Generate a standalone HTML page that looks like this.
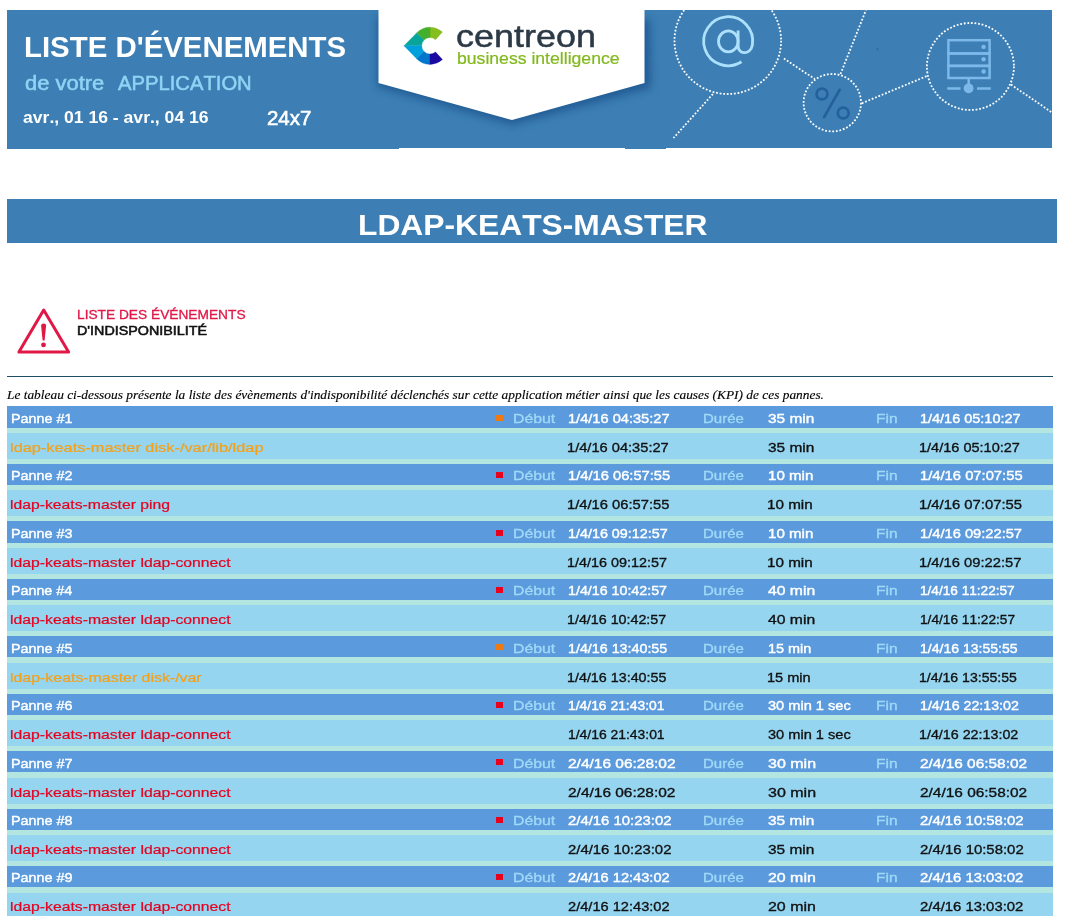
<!DOCTYPE html>
<html><head><meta charset="utf-8"><title>Liste d'évènements</title>
<style>
html,body{margin:0;padding:0;background:#fff}
body{position:relative;width:1069px;height:916px;overflow:hidden;font-family:"Liberation Sans",sans-serif}
.t{position:absolute;white-space:pre;transform-origin:0 0;font-kerning:none}
.r{position:absolute}
svg{position:absolute;left:0;top:0}
</style></head><body>
<div class="r" style="left:7px;top:10px;width:1045px;height:138px;background:#3d7fb4;"></div>
<div class="r" style="left:7px;top:148px;width:392px;height:1px;background:#3d7fb4;"></div>
<div class="r" style="left:625px;top:148px;width:41px;height:1px;background:#3d7fb4;"></div>
<svg width="1069" height="160" viewBox="0 0 1069 160">
<defs>
<clipPath id="bclip"><rect x="7" y="10" width="1045" height="138"/></clipPath>
<filter id="sh" x="-20%" y="-20%" width="140%" height="160%"><feGaussianBlur stdDeviation="4.5"/></filter>
</defs>
<g clip-path="url(#bclip)">
<polygon points="377,16 650,19 651,88 512,125 377,87" fill="#1b548e" opacity="0.8" filter="url(#sh)"/>
<polygon points="378.5,0 644.5,0 644.5,83 512,120 378.5,83" fill="#ffffff"/>
<g fill="none" stroke="#ffffff" stroke-width="1.8" stroke-dasharray="1.8 1.8">
<circle cx="727.8" cy="40.7" r="53.3"/>
<circle cx="832.3" cy="102.7" r="28.7"/>
<circle cx="970.4" cy="66.5" r="43.5"/>
<line x1="712.9" y1="94" x2="673.5" y2="138"/>
<line x1="783.9" y1="58.4" x2="814.8" y2="79"/>
<line x1="840.5" y1="74" x2="866" y2="10"/>
<line x1="861.8" y1="103.3" x2="927" y2="76"/>
<line x1="1011" y1="84.6" x2="1052" y2="112.5"/>
</g>
<g fill="none" stroke="#ace0fb" stroke-width="2.8">
<path d="M741.5,61.8 A24.5,24.5 0 1 1 752.4,45 C751.5,50.5 747.5,53 743.8,52.6 C740,52.2 738.1,49 738.1,45 L738.1,30.4"/>
<ellipse cx="728.3" cy="41.35" rx="9.8" ry="10.5"/>
</g>
<g fill="none" stroke="#23609d" stroke-width="2.7" stroke-linecap="round">
<circle cx="822" cy="94" r="5.45"/>
<circle cx="843.2" cy="113" r="5.45"/>
<line x1="839.6" y1="89.8" x2="824.1" y2="117.2"/>
</g>
<g fill="none" stroke="#7cb9ea" stroke-width="2.5">
<rect x="948.4" y="40.2" width="41.2" height="13.3"/>
<rect x="948.4" y="53.5" width="41.2" height="12.4"/>
<rect x="948.4" y="65.9" width="41.2" height="12.1"/>
<line x1="968.7" y1="79" x2="968.7" y2="86"/>
<line x1="947.2" y1="88.5" x2="960.5" y2="88.5"/>
<line x1="977" y1="88.5" x2="990.8" y2="88.5"/>
</g>
<g fill="#7cb9ea">
<circle cx="983.6" cy="46.9" r="2.2"/>
<circle cx="983.6" cy="59.3" r="2.2"/>
<circle cx="983.6" cy="71.5" r="2.2"/>
<circle cx="968.6" cy="88.3" r="4.9"/>
</g>
<g>
<path d="M442.45,31.98 A18.6,18.6 0 0 0 430,27.2 L430,37.5 A8.3,8.3 0 0 1 435.55,39.63 Z" fill="#86bd1f" stroke="#86bd1f" stroke-width="0.35"/>
<path d="M430,27.2 A18.6,18.6 0 0 0 416.62,32.88 L424.03,40.03 A8.3,8.3 0 0 1 430,37.5 Z" fill="#44ae2d" stroke="#44ae2d" stroke-width="0.35"/>
<path d="M416.62,32.88 L404,45.8 L421.7,45.8 A8.3,8.3 0 0 1 424.03,40.03 Z" fill="#0aa59a" stroke="#0aa59a" stroke-width="0.35"/>
<path d="M404,45.8 L416.62,58.72 L424.03,51.57 A8.3,8.3 0 0 1 421.7,45.8 Z" fill="#00a0dc" stroke="#00a0dc" stroke-width="0.35"/>
<path d="M416.62,58.72 A18.6,18.6 0 0 0 430,64.4 L430,54.1 A8.3,8.3 0 0 1 424.03,51.57 Z" fill="#0076cc" stroke="#0076cc" stroke-width="0.35"/>
<path d="M430,64.4 A18.6,18.6 0 0 0 442.45,59.62 L435.55,51.97 A8.3,8.3 0 0 1 430,54.1 Z" fill="#1a0aa0" stroke="#1a0aa0" stroke-width="0.35"/>
</g>
</g>
<circle cx="877.5" cy="49.3" r="1.2" fill="#3470a6"/>

</svg>

<span class="t" style="left:24.28px;top:32.75px;font-family:'Liberation Sans',sans-serif;font-size:29px;font-weight:bold;font-style:normal;color:#ffffff;line-height:29px;transform:scaleX(1.0132);">LISTE D&#x27;ÉVENEMENTS</span>
<span class="t" style="left:25.37px;top:74.11px;font-family:'Liberation Sans',sans-serif;font-size:19.6px;font-weight:normal;font-style:normal;color:#8fd4f4;line-height:19.6px;transform:scaleX(1.1204);-webkit-text-stroke:0.5px #8fd4f4;">de votre</span>
<span class="t" style="left:117.56px;top:74.11px;font-family:'Liberation Sans',sans-serif;font-size:19.6px;font-weight:normal;font-style:normal;color:#8fd4f4;line-height:19.6px;transform:scaleX(1.0320);-webkit-text-stroke:0.5px #8fd4f4;">APPLICATION</span>
<span class="t" style="left:23.10px;top:109.21px;font-family:'Liberation Sans',sans-serif;font-size:17.0px;font-weight:bold;font-style:normal;color:#ffffff;line-height:17.0px;transform:scaleX(1.0334);">avr., 01 16 - avr., 04 16</span>
<span class="t" style="left:267.09px;top:109.15px;font-family:'Liberation Sans',sans-serif;font-size:19.9px;font-weight:normal;font-style:normal;color:#ffffff;line-height:19.9px;transform:scaleX(1.0282);-webkit-text-stroke:0.6px #ffffff;">24x7</span>
<span class="t" style="left:455.60px;top:20.68px;font-family:'Liberation Sans',sans-serif;font-size:31.8px;font-weight:normal;font-style:normal;color:#2c3a47;line-height:31.8px;transform:scaleX(1.1309);-webkit-text-stroke:0.5px #2c3a47;">centreon</span>
<span class="t" style="left:456.72px;top:50.64px;font-family:'Liberation Sans',sans-serif;font-size:15.9px;font-weight:normal;font-style:normal;color:#82b91c;line-height:15.9px;transform:scaleX(1.1084);-webkit-text-stroke:0.2px #82b91c;">business intelligence</span>
<div class="r" style="left:7px;top:199px;width:1050px;height:44px;background:#3d7fb4;"></div>
<span class="t" style="left:358.14px;top:209.54px;font-family:'Liberation Sans',sans-serif;font-size:30.2px;font-weight:bold;font-style:normal;color:#ffffff;line-height:30.2px;transform:scaleX(1.0526);">LDAP-KEATS-MASTER</span>
<svg width="100" height="400" viewBox="0 0 100 400">
<polygon points="43.7,310 18.9,352.1 68.6,352.1" fill="none" stroke="#e11846" stroke-width="3" stroke-linejoin="round"/>
<path d="M41.1,325.5 Q41.1,323.6 43.6,323.6 Q46.1,323.6 46.1,325.5 L44.6,340.6 L42.6,340.6 Z" fill="#e11846"/>
<circle cx="43.5" cy="344.9" r="2.4" fill="#e11846"/>
</svg>

<span class="t" style="left:76.81px;top:308.83px;font-family:'Liberation Sans',sans-serif;font-size:12.6px;font-weight:normal;font-style:normal;color:#e01848;line-height:12.6px;transform:scaleX(1.0899);-webkit-text-stroke:0.3px #e01848;">LISTE DES ÉVÉNEMENTS</span>
<span class="t" style="left:77.20px;top:324.66px;font-family:'Liberation Sans',sans-serif;font-size:12.8px;font-weight:normal;font-style:normal;color:#111111;line-height:12.8px;transform:scaleX(1.1188);-webkit-text-stroke:0.55px #111111;">D&#x27;INDISPONIBILITÉ</span>
<div class="r" style="left:7px;top:376px;width:1046px;height:1px;background:#1f4d66;"></div>
<span class="t" style="left:7.48px;top:387.84px;font-family:'Liberation Serif',serif;font-size:13.2px;font-weight:normal;font-style:italic;color:#000000;line-height:13.2px;transform:scaleX(1.0141);-webkit-text-stroke:0.15px #000000;">Le tableau ci-dessous présente la liste des évènements d&#x27;indisponibilité déclenchés sur cette application métier ainsi que les causes (KPI) de ces pannes.</span>
<div class="r" style="left:7px;top:406px;width:1046px;height:510px;background:#b3e6e0;"></div>
<div class="r" style="left:7px;top:406px;width:1046px;height:22px;background:#5b9bdd;"></div>
<div class="r" style="left:7px;top:433px;width:1046px;height:26px;background:#95d5f0;"></div>
<span class="t" style="left:10.82px;top:411.87px;font-family:'Liberation Sans',sans-serif;font-size:13.5px;font-weight:normal;font-style:normal;color:#ffffff;line-height:13.5px;transform:scaleX(1.0626);-webkit-text-stroke:0.42px #ffffff;">Panne #1</span>
<div class="r" style="left:496px;top:415px;width:7px;height:6px;background:#f07a12;"></div>
<span class="t" style="left:513.28px;top:411.87px;font-family:'Liberation Sans',sans-serif;font-size:13.5px;font-weight:normal;font-style:normal;color:#a0d9f6;line-height:13.5px;transform:scaleX(1.1722);-webkit-text-stroke:0.35px #a0d9f6;">Début</span>
<span class="t" style="left:567.80px;top:411.87px;font-family:'Liberation Sans',sans-serif;font-size:13.5px;font-weight:normal;font-style:normal;color:#ffffff;line-height:13.5px;transform:scaleX(1.0821);-webkit-text-stroke:0.42px #ffffff;">1/4/16 04:35:27</span>
<span class="t" style="left:703.45px;top:411.87px;font-family:'Liberation Sans',sans-serif;font-size:13.5px;font-weight:normal;font-style:normal;color:#a0d9f6;line-height:13.5px;transform:scaleX(1.1125);-webkit-text-stroke:0.35px #a0d9f6;">Durée</span>
<span class="t" style="left:767.92px;top:411.87px;font-family:'Liberation Sans',sans-serif;font-size:13.5px;font-weight:normal;font-style:normal;color:#ffffff;line-height:13.5px;transform:scaleX(1.1419);-webkit-text-stroke:0.42px #ffffff;">35 min</span>
<span class="t" style="left:876.31px;top:411.87px;font-family:'Liberation Sans',sans-serif;font-size:13.5px;font-weight:normal;font-style:normal;color:#a0d9f6;line-height:13.5px;transform:scaleX(1.1453);-webkit-text-stroke:0.35px #a0d9f6;">Fin</span>
<span class="t" style="left:919.81px;top:411.87px;font-family:'Liberation Sans',sans-serif;font-size:13.5px;font-weight:normal;font-style:normal;color:#ffffff;line-height:13.5px;transform:scaleX(1.0713);-webkit-text-stroke:0.42px #ffffff;">1/4/16 05:10:27</span>
<span class="t" style="left:10.32px;top:440.87px;font-family:'Liberation Sans',sans-serif;font-size:13.5px;font-weight:normal;font-style:normal;color:#f5a017;line-height:13.5px;transform:scaleX(1.2109);-webkit-text-stroke:0.22px #f5a017;">ldap-keats-master disk-/var/lib/ldap</span>
<span class="t" style="left:567.44px;top:440.87px;font-family:'Liberation Sans',sans-serif;font-size:13.5px;font-weight:normal;font-style:normal;color:#111111;line-height:13.5px;transform:scaleX(1.0841);-webkit-text-stroke:0.35px #111111;">1/4/16 04:35:27</span>
<span class="t" style="left:767.88px;top:440.87px;font-family:'Liberation Sans',sans-serif;font-size:13.5px;font-weight:normal;font-style:normal;color:#111111;line-height:13.5px;transform:scaleX(1.1433);-webkit-text-stroke:0.35px #111111;">35 min</span>
<span class="t" style="left:919.45px;top:440.87px;font-family:'Liberation Sans',sans-serif;font-size:13.5px;font-weight:normal;font-style:normal;color:#111111;line-height:13.5px;transform:scaleX(1.0754);-webkit-text-stroke:0.35px #111111;">1/4/16 05:10:27</span>
<div class="r" style="left:7px;top:464px;width:1046px;height:21px;background:#5b9bdd;"></div>
<div class="r" style="left:7px;top:490px;width:1046px;height:26px;background:#95d5f0;"></div>
<span class="t" style="left:10.82px;top:469.32px;font-family:'Liberation Sans',sans-serif;font-size:13.5px;font-weight:normal;font-style:normal;color:#ffffff;line-height:13.5px;transform:scaleX(1.0629);-webkit-text-stroke:0.42px #ffffff;">Panne #2</span>
<div class="r" style="left:496px;top:472px;width:7px;height:6px;background:#e8001c;"></div>
<span class="t" style="left:513.28px;top:469.32px;font-family:'Liberation Sans',sans-serif;font-size:13.5px;font-weight:normal;font-style:normal;color:#a0d9f6;line-height:13.5px;transform:scaleX(1.1722);-webkit-text-stroke:0.35px #a0d9f6;">Début</span>
<span class="t" style="left:567.80px;top:469.32px;font-family:'Liberation Sans',sans-serif;font-size:13.5px;font-weight:normal;font-style:normal;color:#ffffff;line-height:13.5px;transform:scaleX(1.0890);-webkit-text-stroke:0.42px #ffffff;">1/4/16 06:57:55</span>
<span class="t" style="left:703.45px;top:469.32px;font-family:'Liberation Sans',sans-serif;font-size:13.5px;font-weight:normal;font-style:normal;color:#a0d9f6;line-height:13.5px;transform:scaleX(1.1125);-webkit-text-stroke:0.35px #a0d9f6;">Durée</span>
<span class="t" style="left:767.78px;top:469.32px;font-family:'Liberation Sans',sans-serif;font-size:13.5px;font-weight:normal;font-style:normal;color:#ffffff;line-height:13.5px;transform:scaleX(1.1180);-webkit-text-stroke:0.42px #ffffff;">10 min</span>
<span class="t" style="left:876.31px;top:469.32px;font-family:'Liberation Sans',sans-serif;font-size:13.5px;font-weight:normal;font-style:normal;color:#a0d9f6;line-height:13.5px;transform:scaleX(1.1453);-webkit-text-stroke:0.35px #a0d9f6;">Fin</span>
<span class="t" style="left:919.79px;top:469.32px;font-family:'Liberation Sans',sans-serif;font-size:13.5px;font-weight:normal;font-style:normal;color:#ffffff;line-height:13.5px;transform:scaleX(1.0933);-webkit-text-stroke:0.42px #ffffff;">1/4/16 07:07:55</span>
<span class="t" style="left:10.37px;top:498.32px;font-family:'Liberation Sans',sans-serif;font-size:13.5px;font-weight:normal;font-style:normal;color:#e6001f;line-height:13.5px;transform:scaleX(1.1655);-webkit-text-stroke:0.22px #e6001f;">ldap-keats-master ping</span>
<span class="t" style="left:567.44px;top:498.32px;font-family:'Liberation Sans',sans-serif;font-size:13.5px;font-weight:normal;font-style:normal;color:#111111;line-height:13.5px;transform:scaleX(1.0910);-webkit-text-stroke:0.35px #111111;">1/4/16 06:57:55</span>
<span class="t" style="left:767.40px;top:498.32px;font-family:'Liberation Sans',sans-serif;font-size:13.5px;font-weight:normal;font-style:normal;color:#111111;line-height:13.5px;transform:scaleX(1.1278);-webkit-text-stroke:0.35px #111111;">10 min</span>
<span class="t" style="left:919.43px;top:498.32px;font-family:'Liberation Sans',sans-serif;font-size:13.5px;font-weight:normal;font-style:normal;color:#111111;line-height:13.5px;transform:scaleX(1.0975);-webkit-text-stroke:0.35px #111111;">1/4/16 07:07:55</span>
<div class="r" style="left:7px;top:521px;width:1046px;height:22px;background:#5b9bdd;"></div>
<div class="r" style="left:7px;top:548px;width:1046px;height:26px;background:#95d5f0;"></div>
<span class="t" style="left:10.82px;top:526.77px;font-family:'Liberation Sans',sans-serif;font-size:13.5px;font-weight:normal;font-style:normal;color:#ffffff;line-height:13.5px;transform:scaleX(1.0633);-webkit-text-stroke:0.42px #ffffff;">Panne #3</span>
<div class="r" style="left:496px;top:530px;width:7px;height:6px;background:#e8001c;"></div>
<span class="t" style="left:513.28px;top:526.77px;font-family:'Liberation Sans',sans-serif;font-size:13.5px;font-weight:normal;font-style:normal;color:#a0d9f6;line-height:13.5px;transform:scaleX(1.1722);-webkit-text-stroke:0.35px #a0d9f6;">Début</span>
<span class="t" style="left:567.82px;top:526.77px;font-family:'Liberation Sans',sans-serif;font-size:13.5px;font-weight:normal;font-style:normal;color:#ffffff;line-height:13.5px;transform:scaleX(1.0626);-webkit-text-stroke:0.42px #ffffff;">1/4/16 09:12:57</span>
<span class="t" style="left:703.45px;top:526.77px;font-family:'Liberation Sans',sans-serif;font-size:13.5px;font-weight:normal;font-style:normal;color:#a0d9f6;line-height:13.5px;transform:scaleX(1.1125);-webkit-text-stroke:0.35px #a0d9f6;">Durée</span>
<span class="t" style="left:767.78px;top:526.77px;font-family:'Liberation Sans',sans-serif;font-size:13.5px;font-weight:normal;font-style:normal;color:#ffffff;line-height:13.5px;transform:scaleX(1.1180);-webkit-text-stroke:0.42px #ffffff;">10 min</span>
<span class="t" style="left:876.31px;top:526.77px;font-family:'Liberation Sans',sans-serif;font-size:13.5px;font-weight:normal;font-style:normal;color:#a0d9f6;line-height:13.5px;transform:scaleX(1.1453);-webkit-text-stroke:0.35px #a0d9f6;">Fin</span>
<span class="t" style="left:919.80px;top:526.77px;font-family:'Liberation Sans',sans-serif;font-size:13.5px;font-weight:normal;font-style:normal;color:#ffffff;line-height:13.5px;transform:scaleX(1.0874);-webkit-text-stroke:0.42px #ffffff;">1/4/16 09:22:57</span>
<span class="t" style="left:10.37px;top:555.77px;font-family:'Liberation Sans',sans-serif;font-size:13.5px;font-weight:normal;font-style:normal;color:#e6001f;line-height:13.5px;transform:scaleX(1.1666);-webkit-text-stroke:0.22px #e6001f;">ldap-keats-master ldap-connect</span>
<span class="t" style="left:567.46px;top:555.77px;font-family:'Liberation Sans',sans-serif;font-size:13.5px;font-weight:normal;font-style:normal;color:#111111;line-height:13.5px;transform:scaleX(1.0646);-webkit-text-stroke:0.35px #111111;">1/4/16 09:12:57</span>
<span class="t" style="left:767.40px;top:555.77px;font-family:'Liberation Sans',sans-serif;font-size:13.5px;font-weight:normal;font-style:normal;color:#111111;line-height:13.5px;transform:scaleX(1.1278);-webkit-text-stroke:0.35px #111111;">10 min</span>
<span class="t" style="left:919.44px;top:555.77px;font-family:'Liberation Sans',sans-serif;font-size:13.5px;font-weight:normal;font-style:normal;color:#111111;line-height:13.5px;transform:scaleX(1.0917);-webkit-text-stroke:0.35px #111111;">1/4/16 09:22:57</span>
<div class="r" style="left:7px;top:579px;width:1046px;height:21px;background:#5b9bdd;"></div>
<div class="r" style="left:7px;top:605px;width:1046px;height:26px;background:#95d5f0;"></div>
<span class="t" style="left:10.83px;top:584.22px;font-family:'Liberation Sans',sans-serif;font-size:13.5px;font-weight:normal;font-style:normal;color:#ffffff;line-height:13.5px;transform:scaleX(1.0585);-webkit-text-stroke:0.42px #ffffff;">Panne #4</span>
<div class="r" style="left:496px;top:587px;width:7px;height:6px;background:#e8001c;"></div>
<span class="t" style="left:513.28px;top:584.22px;font-family:'Liberation Sans',sans-serif;font-size:13.5px;font-weight:normal;font-style:normal;color:#a0d9f6;line-height:13.5px;transform:scaleX(1.1722);-webkit-text-stroke:0.35px #a0d9f6;">Début</span>
<span class="t" style="left:567.82px;top:584.22px;font-family:'Liberation Sans',sans-serif;font-size:13.5px;font-weight:normal;font-style:normal;color:#ffffff;line-height:13.5px;transform:scaleX(1.0551);-webkit-text-stroke:0.42px #ffffff;">1/4/16 10:42:57</span>
<span class="t" style="left:703.45px;top:584.22px;font-family:'Liberation Sans',sans-serif;font-size:13.5px;font-weight:normal;font-style:normal;color:#a0d9f6;line-height:13.5px;transform:scaleX(1.1125);-webkit-text-stroke:0.35px #a0d9f6;">Durée</span>
<span class="t" style="left:768.39px;top:584.22px;font-family:'Liberation Sans',sans-serif;font-size:13.5px;font-weight:normal;font-style:normal;color:#ffffff;line-height:13.5px;transform:scaleX(1.1630);-webkit-text-stroke:0.42px #ffffff;">40 min</span>
<span class="t" style="left:876.31px;top:584.22px;font-family:'Liberation Sans',sans-serif;font-size:13.5px;font-weight:normal;font-style:normal;color:#a0d9f6;line-height:13.5px;transform:scaleX(1.1453);-webkit-text-stroke:0.35px #a0d9f6;">Fin</span>
<span class="t" style="left:919.86px;top:584.22px;font-family:'Liberation Sans',sans-serif;font-size:13.5px;font-weight:normal;font-style:normal;color:#ffffff;line-height:13.5px;transform:scaleX(1.0087);-webkit-text-stroke:0.42px #ffffff;">1/4/16 11:22:57</span>
<span class="t" style="left:10.37px;top:613.22px;font-family:'Liberation Sans',sans-serif;font-size:13.5px;font-weight:normal;font-style:normal;color:#e6001f;line-height:13.5px;transform:scaleX(1.1666);-webkit-text-stroke:0.22px #e6001f;">ldap-keats-master ldap-connect</span>
<span class="t" style="left:567.47px;top:613.22px;font-family:'Liberation Sans',sans-serif;font-size:13.5px;font-weight:normal;font-style:normal;color:#111111;line-height:13.5px;transform:scaleX(1.0570);-webkit-text-stroke:0.35px #111111;">1/4/16 10:42:57</span>
<span class="t" style="left:768.36px;top:613.22px;font-family:'Liberation Sans',sans-serif;font-size:13.5px;font-weight:normal;font-style:normal;color:#111111;line-height:13.5px;transform:scaleX(1.1639);-webkit-text-stroke:0.35px #111111;">40 min</span>
<span class="t" style="left:919.52px;top:613.22px;font-family:'Liberation Sans',sans-serif;font-size:13.5px;font-weight:normal;font-style:normal;color:#111111;line-height:13.5px;transform:scaleX(1.0126);-webkit-text-stroke:0.35px #111111;">1/4/16 11:22:57</span>
<div class="r" style="left:7px;top:636px;width:1046px;height:21px;background:#5b9bdd;"></div>
<div class="r" style="left:7px;top:663px;width:1046px;height:26px;background:#95d5f0;"></div>
<span class="t" style="left:10.82px;top:641.67px;font-family:'Liberation Sans',sans-serif;font-size:13.5px;font-weight:normal;font-style:normal;color:#ffffff;line-height:13.5px;transform:scaleX(1.0626);-webkit-text-stroke:0.42px #ffffff;">Panne #5</span>
<div class="r" style="left:496px;top:644px;width:7px;height:6px;background:#f07a12;"></div>
<span class="t" style="left:513.28px;top:641.67px;font-family:'Liberation Sans',sans-serif;font-size:13.5px;font-weight:normal;font-style:normal;color:#a0d9f6;line-height:13.5px;transform:scaleX(1.1722);-webkit-text-stroke:0.35px #a0d9f6;">Début</span>
<span class="t" style="left:567.82px;top:641.67px;font-family:'Liberation Sans',sans-serif;font-size:13.5px;font-weight:normal;font-style:normal;color:#ffffff;line-height:13.5px;transform:scaleX(1.0577);-webkit-text-stroke:0.42px #ffffff;">1/4/16 13:40:55</span>
<span class="t" style="left:703.45px;top:641.67px;font-family:'Liberation Sans',sans-serif;font-size:13.5px;font-weight:normal;font-style:normal;color:#a0d9f6;line-height:13.5px;transform:scaleX(1.1125);-webkit-text-stroke:0.35px #a0d9f6;">Durée</span>
<span class="t" style="left:767.81px;top:641.67px;font-family:'Liberation Sans',sans-serif;font-size:13.5px;font-weight:normal;font-style:normal;color:#ffffff;line-height:13.5px;transform:scaleX(1.0694);-webkit-text-stroke:0.42px #ffffff;">15 min</span>
<span class="t" style="left:876.31px;top:641.67px;font-family:'Liberation Sans',sans-serif;font-size:13.5px;font-weight:normal;font-style:normal;color:#a0d9f6;line-height:13.5px;transform:scaleX(1.1453);-webkit-text-stroke:0.35px #a0d9f6;">Fin</span>
<span class="t" style="left:919.83px;top:641.67px;font-family:'Liberation Sans',sans-serif;font-size:13.5px;font-weight:normal;font-style:normal;color:#ffffff;line-height:13.5px;transform:scaleX(1.0394);-webkit-text-stroke:0.42px #ffffff;">1/4/16 13:55:55</span>
<span class="t" style="left:10.36px;top:670.67px;font-family:'Liberation Sans',sans-serif;font-size:13.5px;font-weight:normal;font-style:normal;color:#f5a017;line-height:13.5px;transform:scaleX(1.1773);-webkit-text-stroke:0.22px #f5a017;">ldap-keats-master disk-/var</span>
<span class="t" style="left:567.47px;top:670.67px;font-family:'Liberation Sans',sans-serif;font-size:13.5px;font-weight:normal;font-style:normal;color:#111111;line-height:13.5px;transform:scaleX(1.0597);-webkit-text-stroke:0.35px #111111;">1/4/16 13:40:55</span>
<span class="t" style="left:767.45px;top:670.67px;font-family:'Liberation Sans',sans-serif;font-size:13.5px;font-weight:normal;font-style:normal;color:#111111;line-height:13.5px;transform:scaleX(1.0787);-webkit-text-stroke:0.35px #111111;">15 min</span>
<span class="t" style="left:919.49px;top:670.67px;font-family:'Liberation Sans',sans-serif;font-size:13.5px;font-weight:normal;font-style:normal;color:#111111;line-height:13.5px;transform:scaleX(1.0434);-webkit-text-stroke:0.35px #111111;">1/4/16 13:55:55</span>
<div class="r" style="left:7px;top:694px;width:1046px;height:21px;background:#5b9bdd;"></div>
<div class="r" style="left:7px;top:720px;width:1046px;height:26px;background:#95d5f0;"></div>
<span class="t" style="left:10.82px;top:699.12px;font-family:'Liberation Sans',sans-serif;font-size:13.5px;font-weight:normal;font-style:normal;color:#ffffff;line-height:13.5px;transform:scaleX(1.0632);-webkit-text-stroke:0.42px #ffffff;">Panne #6</span>
<div class="r" style="left:496px;top:702px;width:7px;height:6px;background:#e8001c;"></div>
<span class="t" style="left:513.28px;top:699.12px;font-family:'Liberation Sans',sans-serif;font-size:13.5px;font-weight:normal;font-style:normal;color:#a0d9f6;line-height:13.5px;transform:scaleX(1.1722);-webkit-text-stroke:0.35px #a0d9f6;">Début</span>
<span class="t" style="left:567.84px;top:699.12px;font-family:'Liberation Sans',sans-serif;font-size:13.5px;font-weight:normal;font-style:normal;color:#ffffff;line-height:13.5px;transform:scaleX(1.0275);-webkit-text-stroke:0.42px #ffffff;">1/4/16 21:43:01</span>
<span class="t" style="left:703.45px;top:699.12px;font-family:'Liberation Sans',sans-serif;font-size:13.5px;font-weight:normal;font-style:normal;color:#a0d9f6;line-height:13.5px;transform:scaleX(1.1125);-webkit-text-stroke:0.35px #a0d9f6;">Durée</span>
<span class="t" style="left:767.96px;top:699.12px;font-family:'Liberation Sans',sans-serif;font-size:13.5px;font-weight:normal;font-style:normal;color:#ffffff;line-height:13.5px;transform:scaleX(1.0805);-webkit-text-stroke:0.42px #ffffff;">30 min 1 sec</span>
<span class="t" style="left:876.31px;top:699.12px;font-family:'Liberation Sans',sans-serif;font-size:13.5px;font-weight:normal;font-style:normal;color:#a0d9f6;line-height:13.5px;transform:scaleX(1.1453);-webkit-text-stroke:0.35px #a0d9f6;">Fin</span>
<span class="t" style="left:919.82px;top:699.12px;font-family:'Liberation Sans',sans-serif;font-size:13.5px;font-weight:normal;font-style:normal;color:#ffffff;line-height:13.5px;transform:scaleX(1.0536);-webkit-text-stroke:0.42px #ffffff;">1/4/16 22:13:02</span>
<span class="t" style="left:10.37px;top:728.12px;font-family:'Liberation Sans',sans-serif;font-size:13.5px;font-weight:normal;font-style:normal;color:#e6001f;line-height:13.5px;transform:scaleX(1.1666);-webkit-text-stroke:0.22px #e6001f;">ldap-keats-master ldap-connect</span>
<span class="t" style="left:567.50px;top:728.12px;font-family:'Liberation Sans',sans-serif;font-size:13.5px;font-weight:normal;font-style:normal;color:#111111;line-height:13.5px;transform:scaleX(1.0294);-webkit-text-stroke:0.35px #111111;">1/4/16 21:43:01</span>
<span class="t" style="left:767.92px;top:728.12px;font-family:'Liberation Sans',sans-serif;font-size:13.5px;font-weight:normal;font-style:normal;color:#111111;line-height:13.5px;transform:scaleX(1.0814);-webkit-text-stroke:0.35px #111111;">30 min 1 sec</span>
<span class="t" style="left:919.47px;top:728.12px;font-family:'Liberation Sans',sans-serif;font-size:13.5px;font-weight:normal;font-style:normal;color:#111111;line-height:13.5px;transform:scaleX(1.0579);-webkit-text-stroke:0.35px #111111;">1/4/16 22:13:02</span>
<div class="r" style="left:7px;top:751px;width:1046px;height:21px;background:#5b9bdd;"></div>
<div class="r" style="left:7px;top:778px;width:1046px;height:26px;background:#95d5f0;"></div>
<span class="t" style="left:10.82px;top:756.57px;font-family:'Liberation Sans',sans-serif;font-size:13.5px;font-weight:normal;font-style:normal;color:#ffffff;line-height:13.5px;transform:scaleX(1.0635);-webkit-text-stroke:0.42px #ffffff;">Panne #7</span>
<div class="r" style="left:496px;top:759px;width:7px;height:6px;background:#e8001c;"></div>
<span class="t" style="left:513.28px;top:756.57px;font-family:'Liberation Sans',sans-serif;font-size:13.5px;font-weight:normal;font-style:normal;color:#a0d9f6;line-height:13.5px;transform:scaleX(1.1722);-webkit-text-stroke:0.35px #a0d9f6;">Début</span>
<span class="t" style="left:568.07px;top:756.57px;font-family:'Liberation Sans',sans-serif;font-size:13.5px;font-weight:normal;font-style:normal;color:#ffffff;line-height:13.5px;transform:scaleX(1.1462);-webkit-text-stroke:0.42px #ffffff;">2/4/16 06:28:02</span>
<span class="t" style="left:703.45px;top:756.57px;font-family:'Liberation Sans',sans-serif;font-size:13.5px;font-weight:normal;font-style:normal;color:#a0d9f6;line-height:13.5px;transform:scaleX(1.1125);-webkit-text-stroke:0.35px #a0d9f6;">Durée</span>
<span class="t" style="left:767.90px;top:756.57px;font-family:'Liberation Sans',sans-serif;font-size:13.5px;font-weight:normal;font-style:normal;color:#ffffff;line-height:13.5px;transform:scaleX(1.1853);-webkit-text-stroke:0.42px #ffffff;">30 min</span>
<span class="t" style="left:876.31px;top:756.57px;font-family:'Liberation Sans',sans-serif;font-size:13.5px;font-weight:normal;font-style:normal;color:#a0d9f6;line-height:13.5px;transform:scaleX(1.1453);-webkit-text-stroke:0.35px #a0d9f6;">Fin</span>
<span class="t" style="left:920.08px;top:756.57px;font-family:'Liberation Sans',sans-serif;font-size:13.5px;font-weight:normal;font-style:normal;color:#ffffff;line-height:13.5px;transform:scaleX(1.1408);-webkit-text-stroke:0.42px #ffffff;">2/4/16 06:58:02</span>
<span class="t" style="left:10.37px;top:785.57px;font-family:'Liberation Sans',sans-serif;font-size:13.5px;font-weight:normal;font-style:normal;color:#e6001f;line-height:13.5px;transform:scaleX(1.1666);-webkit-text-stroke:0.22px #e6001f;">ldap-keats-master ldap-connect</span>
<span class="t" style="left:568.03px;top:785.57px;font-family:'Liberation Sans',sans-serif;font-size:13.5px;font-weight:normal;font-style:normal;color:#111111;line-height:13.5px;transform:scaleX(1.1451);-webkit-text-stroke:0.35px #111111;">2/4/16 06:28:02</span>
<span class="t" style="left:767.85px;top:785.57px;font-family:'Liberation Sans',sans-serif;font-size:13.5px;font-weight:normal;font-style:normal;color:#111111;line-height:13.5px;transform:scaleX(1.1867);-webkit-text-stroke:0.35px #111111;">30 min</span>
<span class="t" style="left:920.03px;top:785.57px;font-family:'Liberation Sans',sans-serif;font-size:13.5px;font-weight:normal;font-style:normal;color:#111111;line-height:13.5px;transform:scaleX(1.1419);-webkit-text-stroke:0.35px #111111;">2/4/16 06:58:02</span>
<div class="r" style="left:7px;top:809px;width:1046px;height:21px;background:#5b9bdd;"></div>
<div class="r" style="left:7px;top:835px;width:1046px;height:26px;background:#95d5f0;"></div>
<span class="t" style="left:10.82px;top:814.02px;font-family:'Liberation Sans',sans-serif;font-size:13.5px;font-weight:normal;font-style:normal;color:#ffffff;line-height:13.5px;transform:scaleX(1.0633);-webkit-text-stroke:0.42px #ffffff;">Panne #8</span>
<div class="r" style="left:496px;top:817px;width:7px;height:6px;background:#e8001c;"></div>
<span class="t" style="left:513.28px;top:814.02px;font-family:'Liberation Sans',sans-serif;font-size:13.5px;font-weight:normal;font-style:normal;color:#a0d9f6;line-height:13.5px;transform:scaleX(1.1722);-webkit-text-stroke:0.35px #a0d9f6;">Début</span>
<span class="t" style="left:568.09px;top:814.02px;font-family:'Liberation Sans',sans-serif;font-size:13.5px;font-weight:normal;font-style:normal;color:#ffffff;line-height:13.5px;transform:scaleX(1.1032);-webkit-text-stroke:0.42px #ffffff;">2/4/16 10:23:02</span>
<span class="t" style="left:703.45px;top:814.02px;font-family:'Liberation Sans',sans-serif;font-size:13.5px;font-weight:normal;font-style:normal;color:#a0d9f6;line-height:13.5px;transform:scaleX(1.1125);-webkit-text-stroke:0.35px #a0d9f6;">Durée</span>
<span class="t" style="left:767.92px;top:814.02px;font-family:'Liberation Sans',sans-serif;font-size:13.5px;font-weight:normal;font-style:normal;color:#ffffff;line-height:13.5px;transform:scaleX(1.1419);-webkit-text-stroke:0.42px #ffffff;">35 min</span>
<span class="t" style="left:876.31px;top:814.02px;font-family:'Liberation Sans',sans-serif;font-size:13.5px;font-weight:normal;font-style:normal;color:#a0d9f6;line-height:13.5px;transform:scaleX(1.1453);-webkit-text-stroke:0.35px #a0d9f6;">Fin</span>
<span class="t" style="left:920.09px;top:814.02px;font-family:'Liberation Sans',sans-serif;font-size:13.5px;font-weight:normal;font-style:normal;color:#ffffff;line-height:13.5px;transform:scaleX(1.1043);-webkit-text-stroke:0.42px #ffffff;">2/4/16 10:58:02</span>
<span class="t" style="left:10.37px;top:843.02px;font-family:'Liberation Sans',sans-serif;font-size:13.5px;font-weight:normal;font-style:normal;color:#e6001f;line-height:13.5px;transform:scaleX(1.1666);-webkit-text-stroke:0.22px #e6001f;">ldap-keats-master ldap-connect</span>
<span class="t" style="left:568.05px;top:843.02px;font-family:'Liberation Sans',sans-serif;font-size:13.5px;font-weight:normal;font-style:normal;color:#111111;line-height:13.5px;transform:scaleX(1.1021);-webkit-text-stroke:0.35px #111111;">2/4/16 10:23:02</span>
<span class="t" style="left:767.88px;top:843.02px;font-family:'Liberation Sans',sans-serif;font-size:13.5px;font-weight:normal;font-style:normal;color:#111111;line-height:13.5px;transform:scaleX(1.1433);-webkit-text-stroke:0.35px #111111;">35 min</span>
<span class="t" style="left:920.05px;top:843.02px;font-family:'Liberation Sans',sans-serif;font-size:13.5px;font-weight:normal;font-style:normal;color:#111111;line-height:13.5px;transform:scaleX(1.1053);-webkit-text-stroke:0.35px #111111;">2/4/16 10:58:02</span>
<div class="r" style="left:7px;top:866px;width:1046px;height:21px;background:#5b9bdd;"></div>
<div class="r" style="left:7px;top:893px;width:1046px;height:23px;background:#95d5f0;"></div>
<span class="t" style="left:10.82px;top:871.47px;font-family:'Liberation Sans',sans-serif;font-size:13.5px;font-weight:normal;font-style:normal;color:#ffffff;line-height:13.5px;transform:scaleX(1.0634);-webkit-text-stroke:0.42px #ffffff;">Panne #9</span>
<div class="r" style="left:496px;top:874px;width:7px;height:6px;background:#e8001c;"></div>
<span class="t" style="left:513.28px;top:871.47px;font-family:'Liberation Sans',sans-serif;font-size:13.5px;font-weight:normal;font-style:normal;color:#a0d9f6;line-height:13.5px;transform:scaleX(1.1722);-webkit-text-stroke:0.35px #a0d9f6;">Début</span>
<span class="t" style="left:568.10px;top:871.47px;font-family:'Liberation Sans',sans-serif;font-size:13.5px;font-weight:normal;font-style:normal;color:#ffffff;line-height:13.5px;transform:scaleX(1.0838);-webkit-text-stroke:0.42px #ffffff;">2/4/16 12:43:02</span>
<span class="t" style="left:703.45px;top:871.47px;font-family:'Liberation Sans',sans-serif;font-size:13.5px;font-weight:normal;font-style:normal;color:#a0d9f6;line-height:13.5px;transform:scaleX(1.1125);-webkit-text-stroke:0.35px #a0d9f6;">Durée</span>
<span class="t" style="left:768.06px;top:871.47px;font-family:'Liberation Sans',sans-serif;font-size:13.5px;font-weight:normal;font-style:normal;color:#ffffff;line-height:13.5px;transform:scaleX(1.1787);-webkit-text-stroke:0.42px #ffffff;">20 min</span>
<span class="t" style="left:876.31px;top:871.47px;font-family:'Liberation Sans',sans-serif;font-size:13.5px;font-weight:normal;font-style:normal;color:#a0d9f6;line-height:13.5px;transform:scaleX(1.1453);-webkit-text-stroke:0.35px #a0d9f6;">Fin</span>
<span class="t" style="left:920.10px;top:871.47px;font-family:'Liberation Sans',sans-serif;font-size:13.5px;font-weight:normal;font-style:normal;color:#ffffff;line-height:13.5px;transform:scaleX(1.1000);-webkit-text-stroke:0.42px #ffffff;">2/4/16 13:03:02</span>
<span class="t" style="left:10.37px;top:900.47px;font-family:'Liberation Sans',sans-serif;font-size:13.5px;font-weight:normal;font-style:normal;color:#e6001f;line-height:13.5px;transform:scaleX(1.1666);-webkit-text-stroke:0.22px #e6001f;">ldap-keats-master ldap-connect</span>
<span class="t" style="left:568.06px;top:900.47px;font-family:'Liberation Sans',sans-serif;font-size:13.5px;font-weight:normal;font-style:normal;color:#111111;line-height:13.5px;transform:scaleX(1.0827);-webkit-text-stroke:0.35px #111111;">2/4/16 12:43:02</span>
<span class="t" style="left:768.01px;top:900.47px;font-family:'Liberation Sans',sans-serif;font-size:13.5px;font-weight:normal;font-style:normal;color:#111111;line-height:13.5px;transform:scaleX(1.1802);-webkit-text-stroke:0.35px #111111;">20 min</span>
<span class="t" style="left:920.05px;top:900.47px;font-family:'Liberation Sans',sans-serif;font-size:13.5px;font-weight:normal;font-style:normal;color:#111111;line-height:13.5px;transform:scaleX(1.1010);-webkit-text-stroke:0.35px #111111;">2/4/16 13:03:02</span>
</body></html>
